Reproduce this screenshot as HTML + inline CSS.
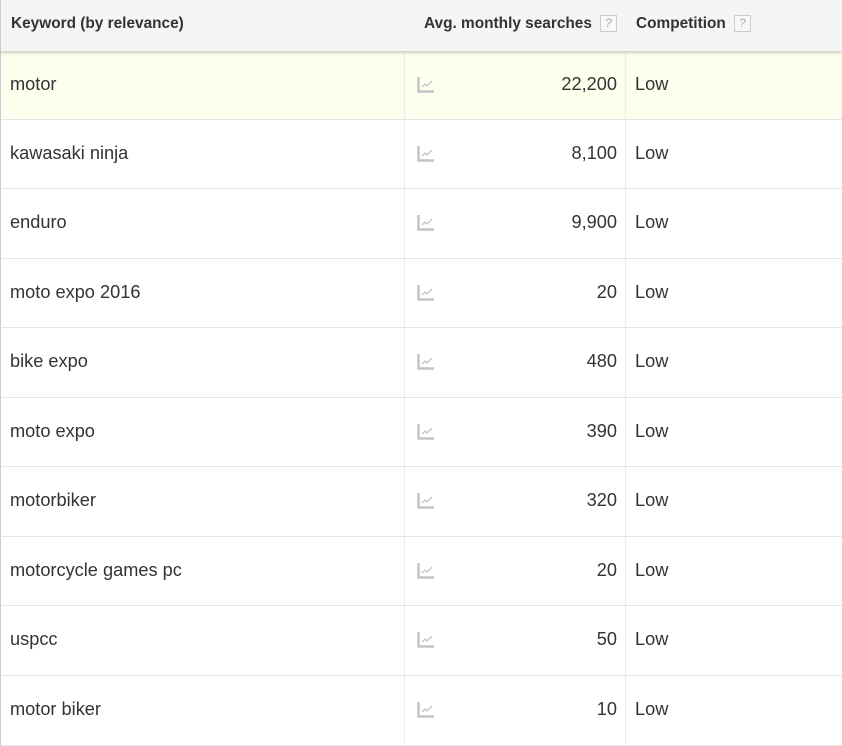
<!DOCTYPE html>
<html><head><meta charset="utf-8"><style>
*{margin:0;padding:0;box-sizing:border-box}
body{width:842px;height:744px;overflow:hidden;background:#fff;font-family:"Liberation Sans",Arial,sans-serif;position:relative}
.hdr{position:absolute;left:0;top:0;width:842px;height:51px;background:#f5f5f5;border-left:1px solid #ccc;box-shadow:0 2px 3px rgba(0,0,0,.18);z-index:2;font-weight:bold;font-size:15.4px;color:#333}
.hdr span{position:absolute;top:15px}
.q{display:inline-block;width:17px;height:17px;border:1px solid #ccc;background:#f8f8f8;color:#aaa;font-size:12px;text-align:center;line-height:15px;font-weight:normal;vertical-align:middle;margin-left:8px}
.row{position:absolute;left:0;width:842px;border-left:1px solid #ccc;border-bottom:1px solid #e5e5e5;font-size:18.2px;color:#333}
.row .k{position:absolute;left:9px;top:23px}
.row .n{position:absolute;right:225px;top:23px}
.row .c{position:absolute;left:634px;top:23px}
.row svg{position:absolute;left:416px;top:25px}
.d1,.d2{position:absolute;top:51px;bottom:0;width:1px;background:#ebebeb;z-index:1}
</style></head><body>
<div class="hdr">
<span style="left:10px">Keyword (by relevance)</span>
<span style="left:423px">Avg. monthly searches<i class="q">?</i></span>
<span style="left:635px">Competition<i class="q">?</i></span>
</div>
<div class="d1" style="left:404px"></div>
<div class="d2" style="left:625px"></div>
<div class="row" style="top:51px;height:69px;background:#fefeee"><span class="k">motor</span><svg width="18" height="18"><path d="M1.5 1V15.5H17" stroke="#c4c4c4" stroke-width="2.5" fill="none"/><path d="M5 11L8 8L10 10L15 5" stroke="#c4c4c4" stroke-width="1.3" fill="none"/></svg><span class="n">22,200</span><span class="c">Low</span></div>
<div class="row" style="top:120px;height:69px"><span class="k">kawasaki ninja</span><svg width="18" height="18"><path d="M1.5 1V15.5H17" stroke="#c4c4c4" stroke-width="2.5" fill="none"/><path d="M5 11L8 8L10 10L15 5" stroke="#c4c4c4" stroke-width="1.3" fill="none"/></svg><span class="n">8,100</span><span class="c">Low</span></div>
<div class="row" style="top:189px;height:70px"><span class="k">enduro</span><svg width="18" height="18"><path d="M1.5 1V15.5H17" stroke="#c4c4c4" stroke-width="2.5" fill="none"/><path d="M5 11L8 8L10 10L15 5" stroke="#c4c4c4" stroke-width="1.3" fill="none"/></svg><span class="n">9,900</span><span class="c">Low</span></div>
<div class="row" style="top:259px;height:69px"><span class="k">moto expo 2016</span><svg width="18" height="18"><path d="M1.5 1V15.5H17" stroke="#c4c4c4" stroke-width="2.5" fill="none"/><path d="M5 11L8 8L10 10L15 5" stroke="#c4c4c4" stroke-width="1.3" fill="none"/></svg><span class="n">20</span><span class="c">Low</span></div>
<div class="row" style="top:328px;height:70px"><span class="k">bike expo</span><svg width="18" height="18"><path d="M1.5 1V15.5H17" stroke="#c4c4c4" stroke-width="2.5" fill="none"/><path d="M5 11L8 8L10 10L15 5" stroke="#c4c4c4" stroke-width="1.3" fill="none"/></svg><span class="n">480</span><span class="c">Low</span></div>
<div class="row" style="top:398px;height:69px"><span class="k">moto expo</span><svg width="18" height="18"><path d="M1.5 1V15.5H17" stroke="#c4c4c4" stroke-width="2.5" fill="none"/><path d="M5 11L8 8L10 10L15 5" stroke="#c4c4c4" stroke-width="1.3" fill="none"/></svg><span class="n">390</span><span class="c">Low</span></div>
<div class="row" style="top:467px;height:70px"><span class="k">motorbiker</span><svg width="18" height="18"><path d="M1.5 1V15.5H17" stroke="#c4c4c4" stroke-width="2.5" fill="none"/><path d="M5 11L8 8L10 10L15 5" stroke="#c4c4c4" stroke-width="1.3" fill="none"/></svg><span class="n">320</span><span class="c">Low</span></div>
<div class="row" style="top:537px;height:69px"><span class="k">motorcycle games pc</span><svg width="18" height="18"><path d="M1.5 1V15.5H17" stroke="#c4c4c4" stroke-width="2.5" fill="none"/><path d="M5 11L8 8L10 10L15 5" stroke="#c4c4c4" stroke-width="1.3" fill="none"/></svg><span class="n">20</span><span class="c">Low</span></div>
<div class="row" style="top:606px;height:70px"><span class="k">uspcc</span><svg width="18" height="18"><path d="M1.5 1V15.5H17" stroke="#c4c4c4" stroke-width="2.5" fill="none"/><path d="M5 11L8 8L10 10L15 5" stroke="#c4c4c4" stroke-width="1.3" fill="none"/></svg><span class="n">50</span><span class="c">Low</span></div>
<div class="row" style="top:676px;height:70px"><span class="k">motor biker</span><svg width="18" height="18"><path d="M1.5 1V15.5H17" stroke="#c4c4c4" stroke-width="2.5" fill="none"/><path d="M5 11L8 8L10 10L15 5" stroke="#c4c4c4" stroke-width="1.3" fill="none"/></svg><span class="n">10</span><span class="c">Low</span></div>
</body></html>
